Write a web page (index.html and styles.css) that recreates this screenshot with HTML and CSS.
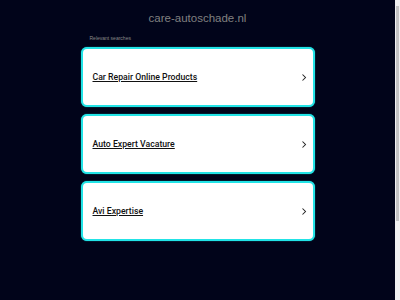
FILE: index.html
```html
<!DOCTYPE html>
<html lang="en">
<head>
  <meta charset="UTF-8" />
  <meta name="viewport" content="width=device-width, initial-scale=1.0"/>
  <title>care-autoschade.nl</title>
  <link rel="stylesheet" href="styles.css">
</head>
<body>
  <div class="page">
    <h1 class="domain">care-autoschade.nl</h1>

    <div class="searches">
      <div class="label">Relevant searches</div>

      <a class="card" href="#">
        <span class="term">Car Repair Online Products</span>
        <svg class="chev" viewBox="0 0 8 12"><path d="M2 2 L6 6 L2 10" /></svg>
      </a>
      <a class="card" href="#">
        <span class="term">Auto Expert Vacature</span>
        <svg class="chev" viewBox="0 0 8 12"><path d="M2 2 L6 6 L2 10" /></svg>
      </a>
      <a class="card" href="#">
        <span class="term">Avi Expertise</span>
        <svg class="chev" viewBox="0 0 8 12"><path d="M2 2 L6 6 L2 10" /></svg>
      </a>
    </div>
  </div>

  <!-- fake browser scrollbar -->
  <div class="scrollbar"><div class="thumb"></div></div>
</body>
</html>
```

FILE: styles.css
```css
html, body {
  margin: 0;
  height: 100%;
}
body {
  font-family: "Liberation Sans", Arial, sans-serif;
  background-color: #01041a;
  overflow: hidden;
}
.page {
  margin-right: 5px;
  display: flex;
  flex-direction: column;
  align-items: center;
}
.domain {
  margin: 11px 0 0;
  font-size: 11.5px;
  font-weight: normal;
  line-height: 14px;
  color: #808080;
}
.searches {
  width: 234px;
  margin-top: 10px;
  display: flex;
  flex-direction: column;
  gap: 7px;
}
.label {
  font-size: 5px;
  line-height: 6px;
  color: #8a8a8a;
  padding-left: 9px;
  margin-bottom: -1px;
}
.card {
  box-sizing: border-box;
  height: 60px;
  display: flex;
  align-items: center;
  justify-content: space-between;
  padding: 0 6px 0 10px;
  background: #fff;
  border: 2px solid #22e3e6;
  border-radius: 6px;
  box-shadow: 0 0 1px #22e3e6;
  text-decoration: none;
}
.term {
  font-family: Roboto, "Liberation Sans", sans-serif;
  font-weight: 500;
  font-size: 8.7px;
  color: #111;
  text-decoration: underline;
}
.chev {
  width: 6px;
  height: 9px;
}
.chev path {
  fill: none;
  stroke: #222;
  stroke-width: 1.4;
}
.scrollbar {
  position: fixed;
  top: 0;
  right: 0;
  width: 5px;
  height: 100%;
  background: #f1f1f1;
}
.thumb {
  margin: 6px 1px 0 1px;
  height: 215px;
  background: #c4c4c4;
}
```
